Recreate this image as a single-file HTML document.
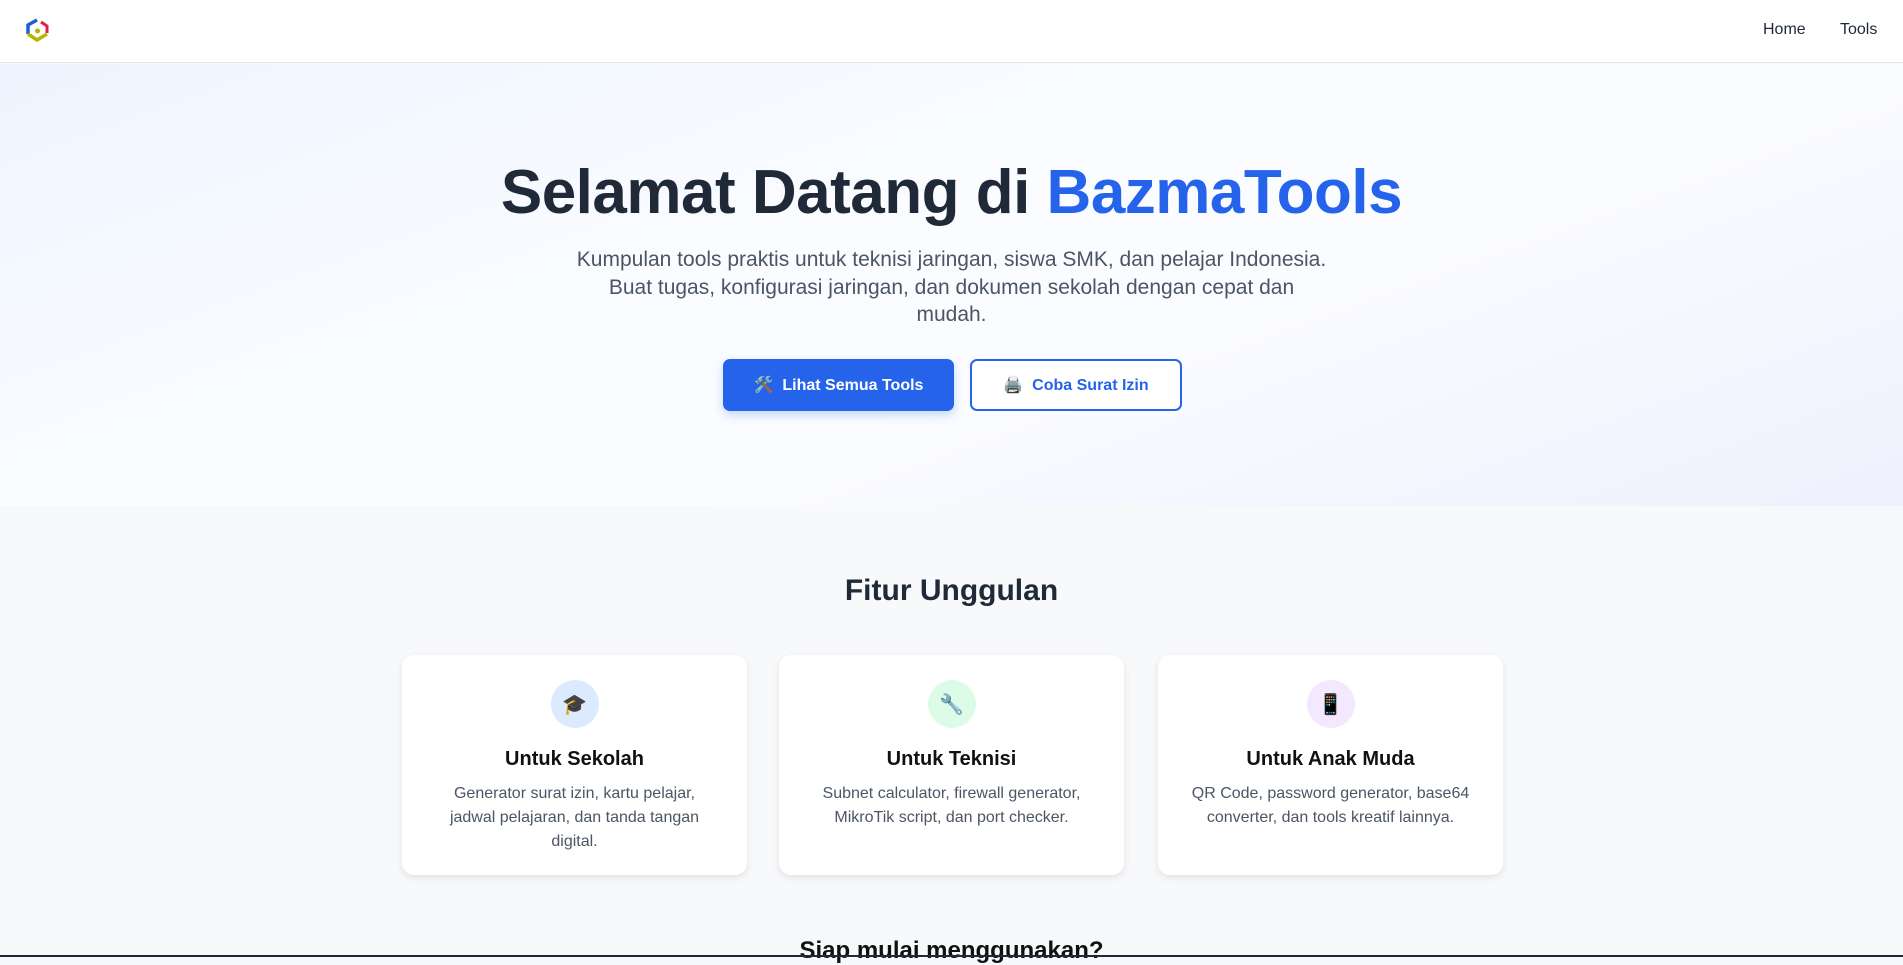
<!DOCTYPE html>
<html><head><meta charset="utf-8"><style>
*{margin:0;padding:0;box-sizing:border-box}
body{width:1903px;height:957px;overflow:hidden;font-family:"Liberation Sans",sans-serif;background:#f8f9fb;position:relative;color:#1f2937}
.nav{position:absolute;top:0;left:0;right:0;height:63px;background:#fff;border-bottom:1px solid #e5e7eb}
.nav a{position:absolute;top:21px;font-size:16px;color:#1f2937;text-decoration:none}
.hero{position:absolute;top:64px;left:0;right:0;height:442px;background:linear-gradient(160deg,#eef4ff 0%,#fafcff 40%,#fbfcff 60%,#eef0fe 100%)}
h1{position:absolute;top:157px;left:0;width:1903px;text-align:center;font-size:62px;font-weight:bold;color:#1f2937;letter-spacing:-0.5px}
h1 span{color:#2563eb}
.sub{position:absolute;top:246px;left:0;width:1903px;text-align:center;font-size:21px;line-height:27.5px;color:#4b5563;white-space:nowrap}
.btn{position:absolute;top:359px;height:52px;border-radius:7px;font-size:16px;font-weight:bold;display:flex;align-items:center;justify-content:center}
.b1{left:723px;width:231px;background:#2563eb;color:#fff;box-shadow:0 4px 10px rgba(37,99,235,.25)}
.b2{left:970px;width:212px;border:2px solid #2563eb;color:#2563eb;background:#fff}
h2{position:absolute;top:574px;left:0;width:1903px;text-align:center;font-size:30px;font-weight:bold;color:#1f2937}
.card{position:absolute;top:655px;width:345px;height:220px;background:#fff;border-radius:12px;box-shadow:0 3px 8px rgba(0,0,0,.09);text-align:center}
.ic{width:48px;height:48px;border-radius:50%;margin:25px auto 0;display:flex;align-items:center;justify-content:center;font-size:20px}
.card h3{margin-top:20px;font-size:20px;font-weight:bold;color:#111}
.card p{margin:11px auto 0;width:290px;font-size:16px;line-height:24px;color:#4b5563}
.bot{position:absolute;top:937px;left:0;width:1903px;text-align:center;font-size:24px;font-weight:bold;color:#111}
.bar{position:absolute;bottom:0;left:0;right:0;height:2px;background:#1f2937}
</style></head><body>
<div class="nav">
<svg style="position:absolute;left:25px;top:17px" width="26" height="28" viewBox="0 0 26 28">
<path d="M12 3 L3 8 V17" stroke="#1d5fd6" stroke-width="3.5" fill="none"/>
<path d="M16 5 L22 9 V16" stroke="#e11d48" stroke-width="3" fill="none"/>
<path d="M3 17 L12 23 L22 17" stroke="#b8b400" stroke-width="3.5" fill="none"/>
<circle cx="12.5" cy="14" r="2.5" fill="#b8b400"/></svg>
<a style="left:1763px">Home</a><a style="left:1840px">Tools</a>
</div>
<div class="hero"></div>
<h1>Selamat Datang di <span>BazmaTools</span></h1>
<div class="sub">Kumpulan tools praktis untuk teknisi jaringan, siswa SMK, dan pelajar Indonesia.<br>Buat tugas, konfigurasi jaringan, dan dokumen sekolah dengan cepat dan<br>mudah.</div>
<div class="btn b1">🛠️&nbsp; Lihat Semua Tools</div>
<div class="btn b2">🖨️&nbsp; Coba Surat Izin</div>
<h2>Fitur Unggulan</h2>
<div class="card" style="left:402px"><div class="ic" style="background:#dbeafe">🎓</div><h3>Untuk Sekolah</h3><p>Generator surat izin, kartu pelajar, jadwal pelajaran, dan tanda tangan digital.</p></div>
<div class="card" style="left:779px"><div class="ic" style="background:#dcfce7">🔧</div><h3>Untuk Teknisi</h3><p>Subnet calculator, firewall generator, MikroTik script, dan port checker.</p></div>
<div class="card" style="left:1158px"><div class="ic" style="background:#f3e8ff">📱</div><h3>Untuk Anak Muda</h3><p>QR Code, password generator, base64 converter, dan tools kreatif lainnya.</p></div>
<div class="bot">Siap mulai menggunakan?</div>
<div class="bar"></div>
</body></html>
